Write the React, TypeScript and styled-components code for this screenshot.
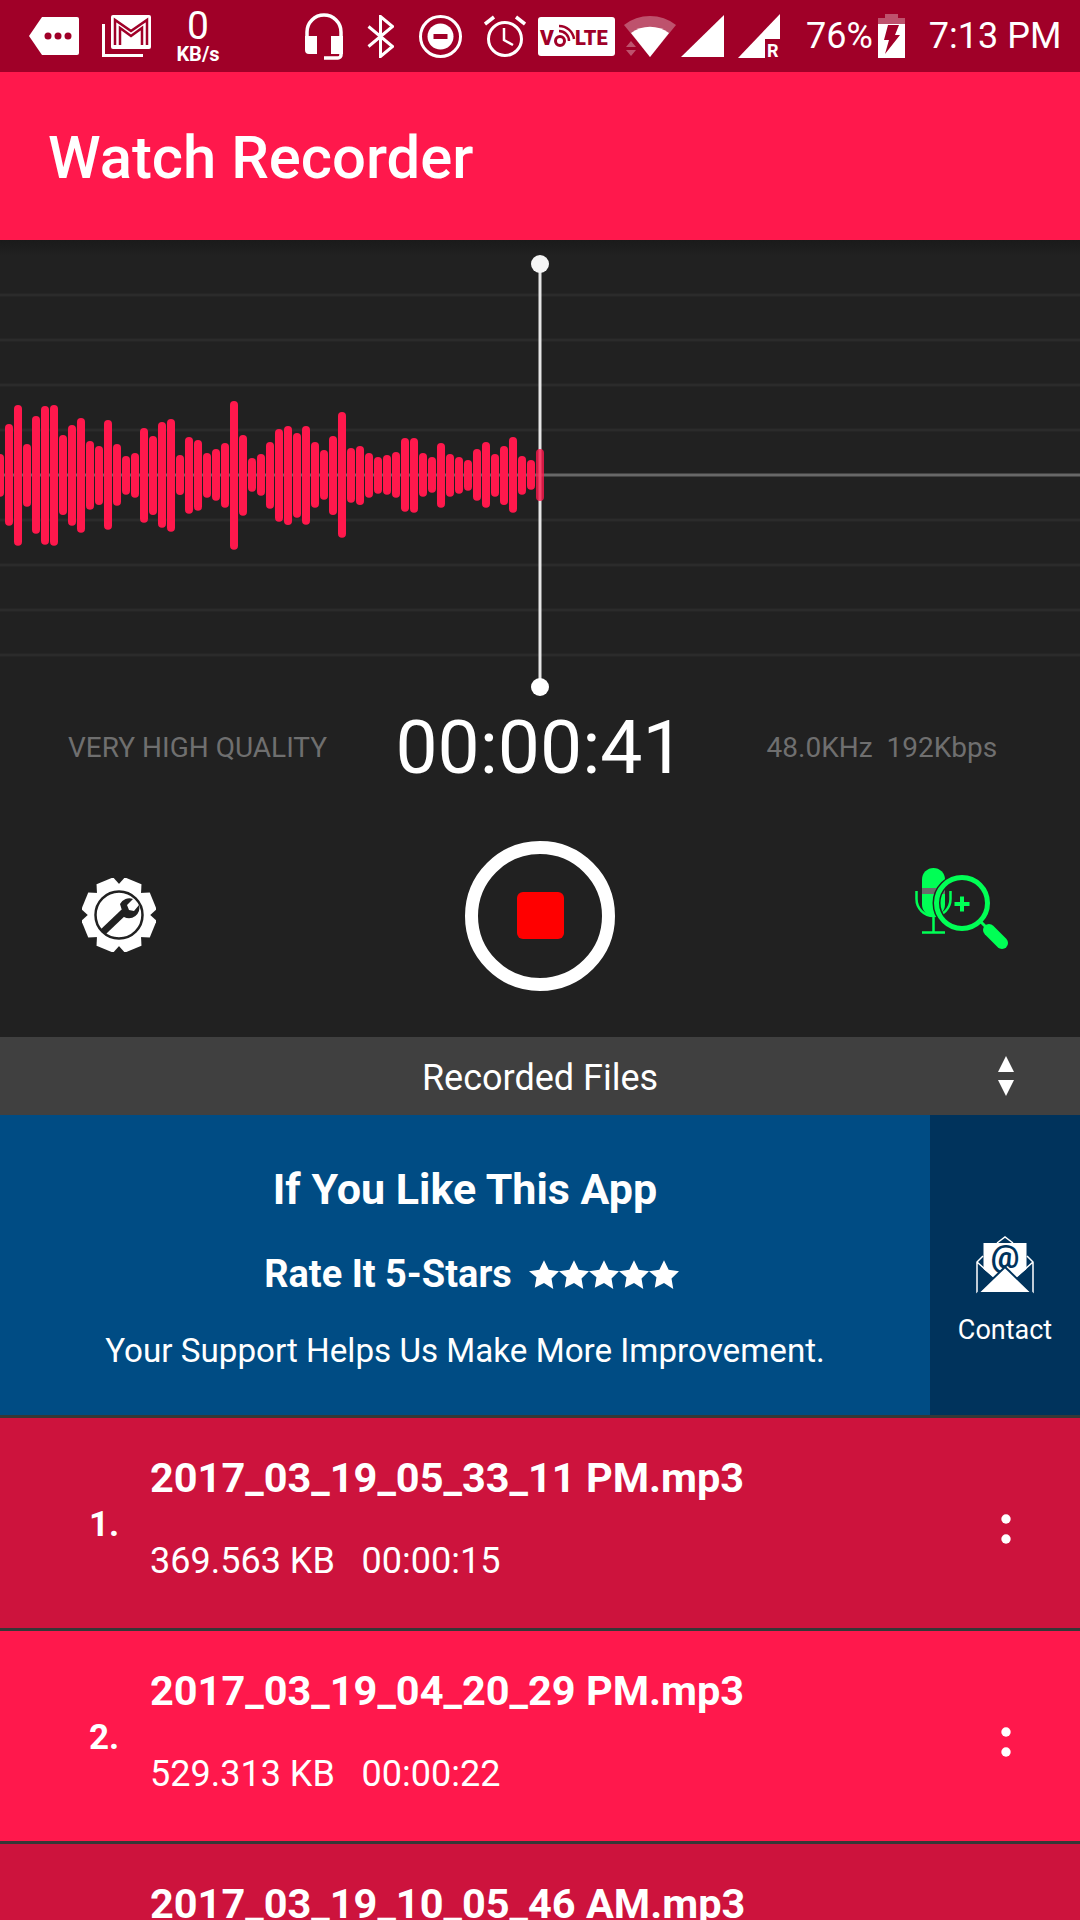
import styled, { createGlobalStyle } from "styled-components";

const GlobalStyle = createGlobalStyle`
  html, body {
    margin: 0;
    padding: 0;
    background: #212121;
  }
  body {
    font-family: Roboto, "Liberation Sans", sans-serif;
    color: #fff;
  }
`;

const Page = styled.div`
  width: 1080px;
  height: 1920px;
  overflow: hidden;
  display: flex;
  flex-direction: column;
  background: #212121;
`;

const StatusBar = styled.div`
  height: 72px;
  flex: none;
  background: #a00028;
  display: flex;
  align-items: center;
  padding-left: 29px;
`;

const StatusIcon = styled.svg<{ $ml: number }>`
  flex: none;
  margin-left: ${(p) => p.$ml}px;
`;

const Speed = styled.div`
  width: 50px;
  margin-left: 22px;
  display: flex;
  flex-direction: column;
  align-items: center;
  font-weight: 700;
  line-height: 1;
`;

const SpeedValue = styled.span`
  font-size: 39px;
  font-weight: 400;
  height: 36px;
  line-height: 36px;
`;

const SpeedUnit = styled.span`
  font-size: 20px;
`;

const Battery = styled.span`
  font-size: 36px;
  margin-left: 26px;
`;

const Clock = styled.span`
  font-size: 36px;
  margin-left: 24px;
`;

const AppBar = styled.header`
  height: 168px;
  flex: none;
  background: #ff184c;
  display: flex;
  align-items: center;
  padding: 4px 0 0 48px;
  box-sizing: border-box;
  font-size: 59.800px;
  font-weight: 500;
`;

const Recorder = styled.section`
  height: 797px;
  flex: none;
  background: #212121;
  display: flex;
  flex-direction: column;
`;

const WaveArea = styled.svg`
  display: block;
  flex: none;
`;

const InfoRow = styled.div`
  display: grid;
  grid-template-columns: 1fr auto 1fr;
  align-items: center;
  height: 90px;
`;

const Quality = styled.span<{ $inset: number }>`
  font-size: 28px;
  color: #6f6f6f;
  justify-self: start;
  padding-left: ${(p) => p.$inset}px;
  white-space: pre;
`;

const Timer = styled.span`
  font-size: 75px;
  font-weight: 400;
  line-height: 1;
  color: #fff;
`;

const Controls = styled.div`
  flex: 1;
  display: grid;
  grid-template-columns: 1fr 150px 1fr;
  align-items: center;
`;

const SettingsIcon = styled.svg`
  display: block;
  justify-self: start;
  margin-left: 82px;
`;

const MicSearchIcon = styled.svg`
  display: block;
  justify-self: end;
  margin: 0 72px 12px 0;
`;

const StopRing = styled.button`
  width: 150px;
  height: 150px;
  box-sizing: border-box;
  border: 13px solid #fff;
  border-radius: 50%;
  background: transparent;
  padding: 0;
  margin-top: 2px;
  display: flex;
  align-items: center;
  justify-content: center;
`;

const StopSquare = styled.span`
  width: 47px;
  height: 47px;
  border-radius: 6px;
  background: #ff0000;
`;

const FilesBar = styled.div`
  height: 78px;
  flex: none;
  box-sizing: border-box;
  padding-top: 3px;
  background: #404040;
  position: relative;
  display: flex;
  align-items: center;
  justify-content: center;
  font-size: 36px;
`;

const SortIcon = styled.svg`
  position: absolute;
  right: 66px;
  top: 19px;
`;

const Banner = styled.div`
  height: 300px;
  flex: none;
  display: flex;
`;

const BannerMain = styled.div`
  flex: 1;
  background: #004c84;
  display: flex;
  flex-direction: column;
  align-items: center;
`;

const BannerTitle = styled.div`
  font-size: 43px;
  font-weight: 700;
  margin-top: 49px;
  line-height: 50px;
`;

const RateLine = styled.div`
  display: flex;
  align-items: center;
  font-size: 38px;
  font-weight: 700;
  margin-top: 37px;
  padding-left: 13px;
  line-height: 46px;
  gap: 17px;
`;

const Stars = styled.span`
  display: flex;
`;

const BannerNote = styled.div`
  font-size: 33.200px;
  margin-top: 33px;
  line-height: 42px;
`;

const ContactPane = styled.div`
  width: 150px;
  flex: none;
  background: #00335c;
  display: flex;
  flex-direction: column;
  align-items: center;
  font-size: 27px;
  line-height: 32px;
  padding-top: 121px;
  box-sizing: border-box;
  gap: 20px;
`;

const FileRow = styled.div<{ $dim: boolean }>`
  flex: none;
  height: 213px;
  box-sizing: border-box;
  border-top: 3px solid #373737;
  background: ${(p) => (p.$dim ? "#cd133d" : "#ff184c")};
  display: flex;
  position: relative;
`;

const FileIndex = styled.div`
  width: 150px;
  flex: none;
  box-sizing: border-box;
  padding: 87px 0 0 89px;
  font-size: 35px;
  font-weight: 700;
  line-height: 40px;
`;

const FileBody = styled.div`
  flex: 1;
  padding-top: 36px;
`;

const FileName = styled.div`
  font-size: 41.500px;
  font-weight: 700;
  line-height: 48px;
`;

const FileMeta = styled.div`
  font-size: 36px;
  margin-top: 38px;
  line-height: 42px;
  white-space: pre;
`;

const Dots = styled.svg`
  position: absolute;
  left: 1001px;
  top: 96px;
`;

const tops: [number, number][] = [
  [642, 770], [552, 857], [495, 917], [612, 800], [528, 881], [498, 914], [495, 917], [585, 825],
  [555, 857], [534, 878], [603, 809], [618, 795], [540, 869], [612, 797], [648, 764], [639, 773],
  [564, 848], [588, 825], [546, 863], [537, 875], [645, 765], [591, 821], [600, 812], [639, 773],
  [627, 782], [609, 803], [483, 929], [585, 827], [654, 755], [642, 767], [606, 806], [567, 845],
  [558, 855], [579, 833], [558, 854], [606, 803], [630, 779], [588, 825], [516, 893], [624, 788],
  [618, 795], [639, 773], [651, 761], [645, 764], [636, 773], [594, 815], [594, 818], [639, 770],
  [651, 758], [609, 803], [642, 770], [651, 761], [660, 752], [627, 782], [606, 803], [642, 770],
  [618, 795], [591, 818], [648, 764], [660, 749], [627, 783],
];

const gridYs = [55, 100, 145, 190, 280, 325, 370, 415];

function Waveform() {
  return (
    <WaveArea width={1080} height={462} viewBox="0 0 1080 462">
      <defs>
        <linearGradient id="topShade" x1="0" y1="0" x2="0" y2="1">
          <stop offset="0" stopColor="#1a1a1a" />
          <stop offset="1" stopColor="#212121" />
        </linearGradient>
      </defs>
      <rect width={1080} height={16} fill="url(#topShade)" />
      {gridYs.map((y) => (
        <rect key={y} x={0} y={y - 1.5} width={1080} height={3} fill="#2b2b2b" />
      ))}
      <rect x={0} y={233.5} width={1080} height={3} fill="#686868" />
      {tops.slice(0, -1).map(([t, b], i) => (
        <rect key={i} x={i * 9 - 4} y={t / 3} width={8} height={(b - t) / 3} rx={4} fill="#ff184c" />
      ))}
      <rect x={538.5} y={24} width={3} height={424} fill="#e6e6e6" />
      <rect x={536} y={209} width={8} height={52} rx={4} fill="#ff184c" opacity={0.8} />
      <circle cx={540} cy={24} r={9} fill="#f5f5f5" />
      <circle cx={540} cy={447} r={9} fill="#fff" />
    </WaveArea>
  );
}

function Star() {
  return (
    <svg width={30} height={29} viewBox="0 0 24 23">
      <path fill="#fff" d="M12 0l3.700 7.600 8.300 1.200-6 5.900 1.400 8.300L12 18.200 4.600 22 6 13.700 0 8.800l8.300-1.200z" />
    </svg>
  );
}

function Row({ index, name, meta, dim }: { index: number; name: string; meta: string; dim: boolean }) {
  return (
    <FileRow $dim={dim}>
      <FileIndex>{index}.</FileIndex>
      <FileBody>
        <FileName>{name}</FileName>
        <FileMeta>{meta}</FileMeta>
      </FileBody>
      <Dots width={10} height={30} viewBox="0 0 10 30">
        <circle cx={5} cy={5} r={4.7} fill="#fff" />
        <circle cx={5} cy={25} r={4.7} fill="#fff" />
      </Dots>
    </FileRow>
  );
}

const gearTeeth = [22.5, 67.5, 112.5, 157.5, 202.5, 247.5, 292.5, 337.5];
const bg = "#212121";
const bar = "#a00028";
const green = "#00ff55";
const navy = "#00335c";

export default function App() {
  return (
    <Page>
      <GlobalStyle />
      <StatusBar>
        <StatusIcon $ml={0} width={50} height={38} viewBox="0 0 50 38">
          <path fill="#fff" d="M13 0h35a2 2 0 0 1 2 2v34a2 2 0 0 1-2 2H13L0 19z" />
          <circle cx={19} cy={19} r={3.500} fill={bar} />
          <circle cx={29} cy={19} r={3.500} fill={bar} />
          <circle cx={39} cy={19} r={3.500} fill={bar} />
        </StatusIcon>
        <StatusIcon $ml={23} width={49} height={42} viewBox="0 0 49 42">
          <path fill="none" stroke="#fff" strokeWidth={3} d="M1.500 9v31.500H41" />
          <rect x={9} width={40} height={34} rx={2} fill="#fff" />
          <path fill="none" stroke={bar} strokeWidth={2.500} d="M13 30V5l16 11L45 5v25" />
          <path fill="none" stroke={bar} strokeWidth={2.500} d="M18 30V13l11 8 11-8v17" />
        </StatusIcon>
        <Speed>
          <SpeedValue>0</SpeedValue>
          <SpeedUnit>KB/s</SpeedUnit>
        </Speed>
        <StatusIcon $ml={82} width={38} height={47} viewBox="0 0 38 47">
          <path fill="none" stroke="#fff" strokeWidth={3.500} d="M2 24V19a17 17 0 0 1 34 0v23a3 3 0 0 1-3 3H19" />
          <path fill="#fff" d="M0 23h12v18H4a4 4 0 0 1-4-4zM26 23h12v18H26z" />
        </StatusIcon>
        <StatusIcon $ml={24} width={27} height={43} viewBox="0 0 27 43">
          <path fill="none" stroke="#fff" strokeWidth={3} d="M1.500 11.500l24 20-12 10V1.500l12 10-24 20" />
        </StatusIcon>
        <StatusIcon $ml={25} width={43} height={43} viewBox="0 0 43 43">
          <circle cx={21.500} cy={21.500} r={20} fill="none" stroke="#fff" strokeWidth={3} />
          <circle cx={21.500} cy={21.500} r={13} fill="#fff" />
          <rect x={14.500} y={19} width={14} height={5} fill={bar} />
        </StatusIcon>
        <StatusIcon $ml={22} width={42} height={43} viewBox="0 0 42 43">
          <circle cx={21} cy={24} r={16.500} fill="none" stroke="#fff" strokeWidth={3} />
          <path fill="none" stroke="#fff" strokeWidth={2.500} d="M20 13v12l9 5" />
          <path fill="none" stroke="#fff" strokeWidth={3.500} d="M1 9l9-7M41 9l-9-7" />
        </StatusIcon>
        <StatusIcon $ml={12} width={77} height={39} viewBox="0 0 77 39">
          <rect width={77} height={39} rx={3} fill="#fff" />
          <text x={2} y={28} fontFamily="Roboto, sans-serif" fontWeight={900} fontSize={21} fill={bar}>V</text>
          <circle cx={22} cy={24} r={4.500} fill="none" stroke={bar} strokeWidth={3} />
          <path fill="none" stroke={bar} strokeWidth={2.500} d="M21 14a10 10 0 0 1 10 10M21 9a15 15 0 0 1 15 13" />
          <text x={37} y={28} fontFamily="Roboto, sans-serif" fontWeight={900} fontSize={20} fill={bar}>LTE</text>
        </StatusIcon>
        <StatusIcon $ml={9} width={52} height={42} viewBox="0 0 52 42">
          <path fill="#fff" opacity={0.32} d="M0 10a42 42 0 0 1 52 0L26 42z" />
          <path fill="#fff" d="M7 18a32 32 0 0 1 38 0L26 42z" />
          <path fill="#fff" opacity={0.32} d="M2 32l5-6 5 6zM2 35h10l-5 6z" />
        </StatusIcon>
        <StatusIcon $ml={5} width={43} height={42} viewBox="0 0 43 42">
          <path fill="#fff" d="M43 0v42H0z" />
        </StatusIcon>
        <StatusIcon $ml={14} width={42} height={44} viewBox="0 0 42 44">
          <path fill="#fff" d="M42 0v44H0z" />
          <rect x={27} y={25} width={15} height={19} fill={bar} />
          <text x={29} y={43} fontFamily="Roboto, sans-serif" fontWeight={700} fontSize={18} fill="#fff">R</text>
        </StatusIcon>
        <Battery>76%</Battery>
        <StatusIcon $ml={5} width={27} height={44} viewBox="0 0 27 44">
          <path fill="#fff" opacity={0.32} d="M7 0h13v4h7v10H0V4h7z" />
          <path fill="#fff" d="M0 10h27v34H0z" />
          <path fill={bar} d="M10 11h11l-4 10h5L7 40l4-14H6z" />
        </StatusIcon>
        <Clock>7:13 PM</Clock>
      </StatusBar>

      <AppBar>Watch Recorder</AppBar>

      <Recorder>
        <Waveform />
        <InfoRow>
          <Quality $inset={68}>VERY HIGH QUALITY</Quality>
          <Timer>00:00:41</Timer>
          <Quality $inset={82}>{"48.0KHz  192Kbps"}</Quality>
        </InfoRow>
        <Controls>
          <SettingsIcon width={74} height={74} viewBox="0 0 74 74">
            <g fill="#fff">
              {gearTeeth.map((a) => (
                <path key={a} d="M28 0h18l5 14H23z" transform={`rotate(${a} 37 37)`} />
              ))}
              <circle cx={37} cy={37} r={30} />
            </g>
            <circle cx={37} cy={37} r={23.500} fill="none" stroke={bg} strokeWidth={2.500} />
            <path fill="none" stroke={bg} strokeWidth={7} d="M21 54l21-20" />
            <path fill={bg} d="M38 26a10.500 10.500 0 0 1 13-5l-6 6 2 5 5 1 5-6a10.500 10.500 0 0 1-15 12z" />
          </SettingsIcon>
          <StopRing aria-label="Stop">
            <StopSquare />
          </StopRing>
          <MicSearchIcon width={93} height={82} viewBox="0 0 93 82">
            <rect x={7} y={0} width={23} height={48} rx={11.500} fill={green} />
            <rect x={7} y={20} width={23} height={6} fill="#6a6a6a" />
            <path fill="none" stroke={green} strokeWidth={2.500} d="M1.500 23v8a17 17 0 0 0 34 0v-8M18.500 49v15M7 64.500h23" />
            <circle cx={47} cy={35} r={25.500} fill="none" stroke={bg} strokeWidth={8} />
            <circle cx={47} cy={35} r={25.500} fill="none" stroke={green} strokeWidth={5} />
            <path fill="none" stroke={green} strokeWidth={4} d="M39.500 36h15M47 28.500v15" />
            <path fill="none" stroke={green} strokeWidth={3} d="M66 54l8 8" />
            <path fill="none" stroke={green} strokeWidth={12} strokeLinecap="round" d="M74 62l13 13" />
          </MicSearchIcon>
        </Controls>
      </Recorder>

      <FilesBar>
        Recorded Files
        <SortIcon width={16} height={40} viewBox="0 0 16 40">
          <path fill="#fff" d="M8 0l8 16H0zM0 24h16l-8 16z" />
        </SortIcon>
      </FilesBar>

      <Banner>
        <BannerMain>
          <BannerTitle>If You Like This App</BannerTitle>
          <RateLine>
            Rate It 5-Stars
            <Stars>
              <Star />
              <Star />
              <Star />
              <Star />
              <Star />
            </Stars>
          </RateLine>
          <BannerNote>Your Support Helps Us Make More Improvement.</BannerNote>
        </BannerMain>
        <ContactPane>
          <svg width={58} height={58} viewBox="0 0 58 58">
            <rect x={7.500} y={7} width={43} height={34} fill="#fff" />
            <text x={29} y={32} textAnchor="middle" fontFamily="Roboto, sans-serif" fontWeight={700} fontSize={32} fill={navy}>@</text>
            <path fill={navy} d="M0 27l20 16L0 58zM58 27L38 43l20 15z" />
            <path fill="none" stroke="#fff" strokeWidth={1.500} d="M7 20L1 26v31h56V26l-6-6M21 7l8-6 8 6M1 26l19 17M57 26L38 43" />
            <path fill="#fff" stroke={navy} strokeWidth={2} d="M29 31l27 26H2z" />
          </svg>
          Contact
        </ContactPane>
      </Banner>

      <Row index={1} name="2017_03_19_05_33_11 PM.mp3" meta="369.563 KB   00:00:15" dim />
      <Row index={2} name="2017_03_19_04_20_29 PM.mp3" meta="529.313 KB   00:00:22" dim={false} />
      <Row index={3} name="2017_03_19_10_05_46 AM.mp3" meta="" dim />
    </Page>
  );
}
